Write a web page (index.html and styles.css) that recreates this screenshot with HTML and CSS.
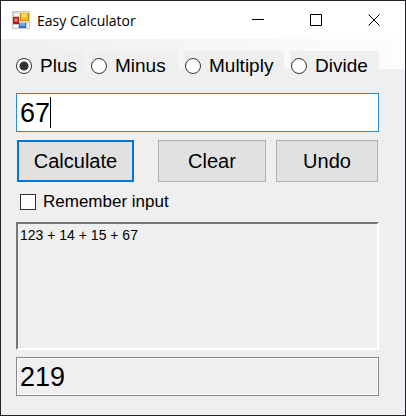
FILE: index.html
```html
<!DOCTYPE html>
<html lang="en">
<head>
<meta charset="utf-8">
<title>Easy Calculator</title>
<link rel="stylesheet" href="styles.css">
</head>
<body>
<div class="window">
  <header class="titlebar">
    <svg class="app-icon" width="18" height="18" viewBox="0 0 18 18" aria-hidden="true">
      <rect width="18" height="18" rx="1" fill="#c9c9c9"/>
      <path d="M2 2h5v3H2zM1 14h5v3H1zM15 12h2v5h-2z" fill="#f4f4f4"/>
      <rect x="7" y="1" width="10" height="10" fill="#f3e3b0"/>
      <rect x="8" y="2" width="9" height="8" fill="#c98d10"/>
      <rect x="9" y="2" width="7" height="7" fill="#f5bd2b"/>
      <rect x="10" y="3" width="4" height="3" fill="#ffdb70"/>
      <rect x="1" y="6" width="6" height="7" fill="#b01c1c"/>
      <rect x="2" y="7" width="4" height="4" fill="#d84b45"/>
      <rect x="3" y="8" width="2" height="2" fill="#ef8b82"/>
      <rect x="7" y="12" width="7" height="5" fill="#3270cc"/>
      <rect x="8" y="12" width="5" height="3" fill="#70aaf5"/>
    </svg>
    <h1 class="title">Easy Calculator</h1>
    <div class="controls">
      <button class="control" type="button" aria-label="Minimize"><svg width="12" height="12" viewBox="0 0 12 12"><path d="M0 5.500h12" stroke="#000"/></svg></button>
      <button class="control" type="button" aria-label="Maximize"><svg width="12" height="12" viewBox="0 0 12 12"><path d="M.5.5h11v11H.5z" fill="none" stroke="#000"/></svg></button>
      <button class="control" type="button" aria-label="Close"><svg width="12" height="12" viewBox="0 0 12 12"><path d="M.5.5l11 11M11.500.5l-11 11" stroke="#000"/></svg></button>
    </div>
  </header>
  <form class="calculator">
    <div class="operations">
      <label class="operation"><input class="radio" type="radio" name="op" checked>Plus</label>
      <label class="operation"><input class="radio" type="radio" name="op">Minus</label>
      <label class="operation"><input class="radio" type="radio" name="op">Multiply</label>
      <label class="operation"><input class="radio" type="radio" name="op">Divide</label>
    </div>
    <div class="fields">
      <div class="entry">
        <input class="number" type="text" value="67" aria-label="Number">
        <span class="caret"></span>
      </div>
      <div class="actions">
        <button class="action primary" type="button">Calculate</button>
        <button class="action" type="button">Clear</button>
        <button class="action" type="button">Undo</button>
      </div>
      <label class="remember"><input class="checkbox" type="checkbox">Remember input</label>
      <textarea class="history" aria-label="History" readonly>123 + 14 + 15 + 67</textarea>
      <input class="result" type="text" value="219" aria-label="Result" readonly>
    </div>
  </form>
</div>
</body>
</html>
```
FILE: styles.css
```css
* {
  box-sizing: border-box;
}

body {
  margin: 0;
  font-family: "Liberation Sans", Arial, sans-serif;
  font-size: 20px;
  color: #000;
}

button,
input,
textarea {
  margin: 0;
  font-family: inherit;
  color: inherit;
  border-radius: 0;
  outline: none;
}

.window {
  display: flex;
  flex-direction: column;
  min-height: 100vh;
  background: #efefef;
  border: 1px solid #232428;
}

.titlebar {
  display: flex;
  align-items: center;
  height: 38px;
  padding: 0 2px 0 11px;
  background: #fff;
}

.title {
  flex: 1;
  margin: 0 0 0 7px;
  font: 400 14px "Open Sans", "Noto Sans", sans-serif;
}

.controls {
  display: flex;
}

.control {
  display: flex;
  align-items: center;
  justify-content: center;
  width: 58px;
  height: 38px;
  padding: 0;
  background: none;
  border: 0;
}

.operations {
  display: grid;
  grid-template-columns: 69fr 88fr 100fr 89fr;
  gap: 6px;
  height: 30px;
  margin-bottom: 24px;
  padding: 12px 26px 0 14px;
  background: linear-gradient(90deg, #efefef, #fdfdfd);
}

.operation {
  display: flex;
  align-items: center;
  gap: 8px;
  height: 30px;
  padding-left: 1px;
  background: #efefef;
  font-size: 19px;
}

.radio {
  appearance: none;
  flex: none;
  width: 16px;
  height: 16px;
  background: #fff;
  border: 1px solid #333;
  border-radius: 50%;
}

.radio:checked {
  background: radial-gradient(circle, #333 4px, #fff 5px);
}

.fields {
  display: flex;
  flex-direction: column;
  padding: 0 26px 18px 15px;
}

.entry {
  position: relative;
}

.number,
.result {
  display: block;
  width: 100%;
  height: 39px;
  padding: 1px 3px 0;
  font-size: 27px;
}

.number {
  background: #fff;
  border: 1px solid #2a8ddc;
}

.caret {
  position: absolute;
  top: 4px;
  left: 34px;
  width: 1px;
  height: 31px;
  background: #000;
}

.actions {
  display: grid;
  grid-template-columns: 131fr 108fr 102fr;
  column-gap: 10px;
  margin: 8px 1px 0;
}

.action {
  height: 42px;
  padding: 0;
  background: #e1e1e1;
  border: 1px solid #b0b0b0;
  font-size: 20px;
}

.primary {
  margin-right: 14px;
  border: 2px solid #0078d7;
}

.remember {
  display: flex;
  align-items: center;
  align-self: flex-start;
  gap: 7px;
  height: 20px;
  margin: 10px 0 10px 4px;
  font-size: 17px;
}

.checkbox {
  appearance: none;
  width: 16px;
  height: 16px;
  background: #fff;
  border: 1px solid #333;
}

.history {
  display: block;
  width: 100%;
  height: 128px;
  padding: 2px;
  background: #efefef;
  border: 2px solid;
  border-color: #777 #fff #fff #777;
  font-size: 14px;
  line-height: 18px;
  resize: none;
}

.result {
  margin-top: 7px;
  background: #efefef;
  border: 1px solid #888;
  box-shadow: inset 0 0 0 1px #fff;
}
```
